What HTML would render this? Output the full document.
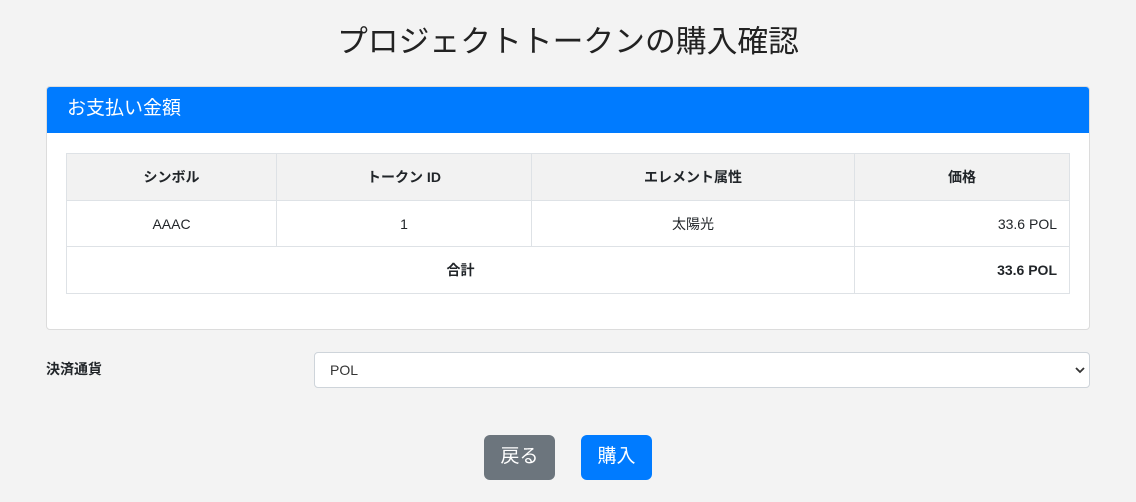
<!DOCTYPE html>
<html><head><meta charset="utf-8"><style>
body{margin:0;background:#f3f3f3;font-family:"Liberation Sans","Noto Sans CJK JP",sans-serif;color:#212529;width:1136px;height:502px;overflow:hidden;position:relative}
.abs{position:absolute}
h1{position:absolute;left:0;width:1136px;top:20px;margin:0;text-align:center;font-weight:400;font-size:30.8px;line-height:44px;color:#222}
.card{left:46px;top:86px;width:1042px;height:242px;background:#fff;border:1px solid #dcdcdc;border-radius:4px;overflow:hidden}
.hd{background:#007bff;color:#fff;height:46px;font-size:19px;line-height:44px;padding-left:20px}
table{position:absolute;left:19px;top:66px;width:1004px;border-collapse:collapse;font-size:14px}
td,th{border:1px solid #dee2e6;height:45.7px;padding:0 12px;text-align:center}
th{background:#f2f2f2;font-weight:700}
.r{text-align:right}
.sel{left:314px;top:352px;width:776px;height:36px;background:#fff;border:1px solid #ced4da;border-radius:4px;font-size:14px;line-height:35px;box-sizing:border-box;padding-left:15px;color:#333}
.btn{top:435px;height:45px;width:71px;border-radius:6px;color:#fff;font-size:19px;line-height:44px;text-align:center}
</style></head><body>
<h1>プロジェクトトークンの購入確認</h1>
<div class="abs card"><div class="hd">お支払い金額</div>
<table>
<tr><th style="width:185px">シンボル</th><th style="width:230px">トークン ID</th><th style="width:298px">エレメント属性</th><th>価格</th></tr>
<tr><td>AAAC</td><td>1</td><td>太陽光</td><td class="r">33.6 POL</td></tr>
<tr><th colspan="3" style="background:#fff">合計</th><th class="r" style="background:#fff">33.6 POL</th></tr>
</table></div>
<div class="abs" style="left:46px;top:359px;font-size:14px;font-weight:700">決済通貨</div>
<div class="abs sel">POL<svg class="abs" style="right:4px;top:13px" width="10" height="8" viewBox="0 0 10 8"><path d="M1 2l4 4 4-4" stroke="#333" stroke-width="1.8" fill="none"/></svg></div>
<div class="abs btn" style="left:484px;background:#6c757d">戻る</div>
<div class="abs btn" style="left:581px;background:#007bff">購入</div>
</body></html>
